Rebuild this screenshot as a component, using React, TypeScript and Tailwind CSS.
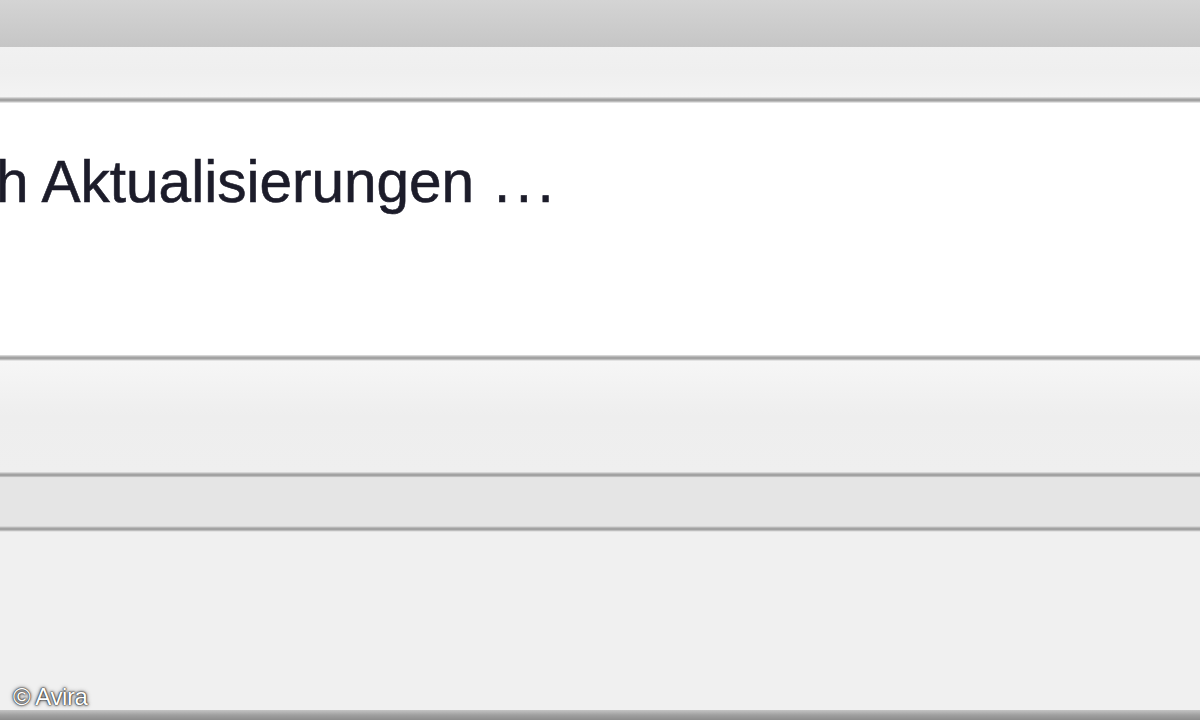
import React from "react";

function Rule() {
  return (
    <div className="flex flex-col">
      <div className="h-[1px] bg-[#d6d6d6]" />
      <div className="h-[1px] bg-[#b8b8b8]" />
      <div className="h-[2px] bg-[#a2a2a2]" />
      <div className="h-[1px] bg-[#bdbdbd]" />
      <div className="h-[1px] bg-[#e2e2e2]" />
    </div>
  );
}

export default function App() {
  return (
    <div className="w-[1200px] h-[720px] overflow-hidden flex flex-col bg-[#f0f0f0] font-['Liberation_Sans',Arial,sans-serif] relative">
      {/* top gray bar */}
      <div className="h-[47px] bg-gradient-to-b from-[#d4d4d4] to-[#c6c6c6]" />
      {/* light band */}
      <div className="h-[50px] bg-gradient-to-b from-[#f1f1f1] via-[#efefef] to-[#f3f3f3]" />
      <Rule />
      {/* white content */}
      <div className="h-[252px] bg-white pt-[50px] overflow-hidden">
        <div className="ml-[-4px] whitespace-nowrap text-[58.5px] leading-[58px] text-[#1c1c2a] [-webkit-text-stroke:0.6px_#1c1c2a]">
          h Aktualisierungen<span className="ml-[20px] tracking-[5.5px]">...</span>
        </div>
      </div>
      <Rule />
      {/* light panel */}
      <div className="h-[111px] bg-gradient-to-b from-[#f6f6f6] via-[#eeeeee] to-[#efefef]" />
      <Rule />
      {/* darker band */}
      <div className="h-[48px] bg-[#e5e5e5]" />
      <Rule />
      {/* bottom area */}
      <div className="flex-1 bg-[#f0f0f0] flex items-end pl-[13px] pb-[1px]">
        <span className="text-[24px] leading-[25px] text-white tracking-[-0.4px] [text-shadow:0_0_1px_#222,0_0_2px_#333,0_0_3px_#555,0_0_5px_#888]">
          © Avira
        </span>
      </div>
      <div className="h-[10px] bg-gradient-to-b from-[#c4c4c4] via-[#a0a0a0] to-[#8c8c8c]" />
    </div>
  );
}
